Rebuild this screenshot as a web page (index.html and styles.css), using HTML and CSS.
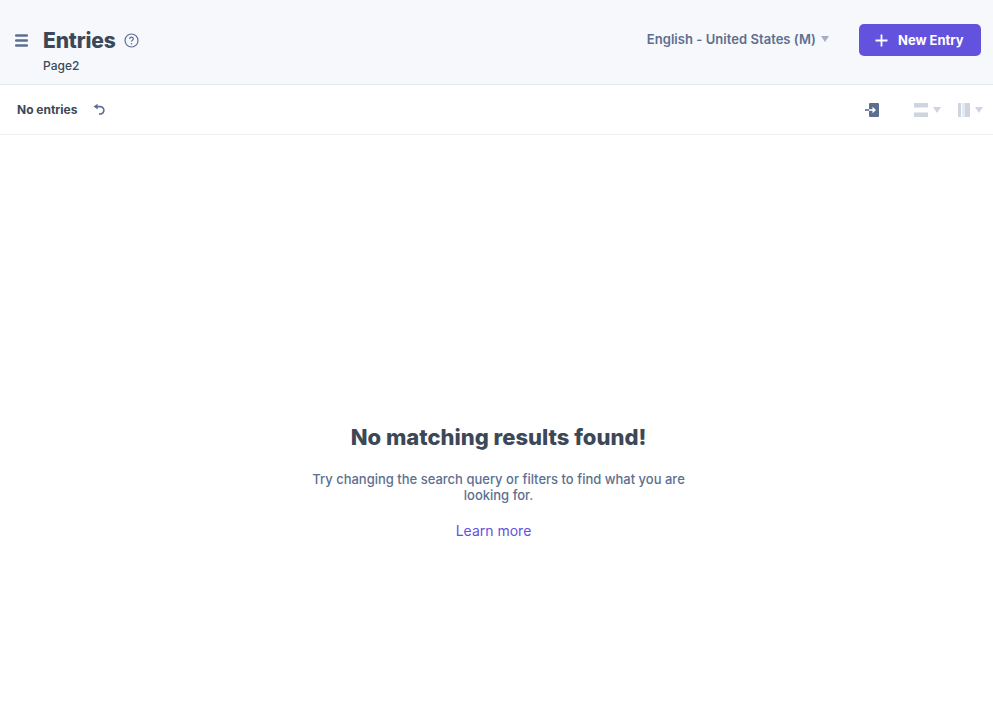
FILE: index.html
```html
<!DOCTYPE html>
<html lang="en">
<head>
    <meta charset="UTF-8">
    <title>Entries</title>
    <link rel="stylesheet" href="styles.css">
</head>
<body>
    <header class="top-bar">
        <button class="menu-btn" aria-label="Menu">
            <svg width="13" height="13" viewBox="0 0 13 13"><path d="M1.2 1.5h10.6M1.2 6.5h10.6M1.2 11.5h10.6" stroke="#5d6f90" stroke-width="2.5" stroke-linecap="round" fill="none"/></svg>
        </button>
        <div class="title-block">
            <div class="title-row">
                <h1>Entries</h1>
                <svg class="help" width="15" height="15" viewBox="0 0 15 15"><circle cx="7.5" cy="7.5" r="6.5" stroke="#5d6f90" stroke-width="1.2" fill="none"/><path d="M5.7 5.9c0-1 .8-1.7 1.8-1.7s1.8.7 1.8 1.6c0 1.4-1.8 1.4-1.8 2.8" stroke="#5d6f90" stroke-width="1.2" fill="none"/><circle cx="7.5" cy="10.7" r=".8" fill="#5d6f90"/></svg>
            </div>
            <div class="subtitle">Page2</div>
        </div>
        <div class="locale">
            <span>English - United States (M)</span>
            <span class="caret caret-locale"></span>
        </div>
        <button class="new-entry">
            <svg width="13" height="13" viewBox="0 0 13 13"><path d="M6.5 0.5v12M0.5 6.5h12" stroke="#fff" stroke-width="1.8" fill="none"/></svg>
            New Entry
        </button>
    </header>

    <div class="toolbar">
        <span class="count">No entries</span>
        <svg class="refresh" width="13" height="13" viewBox="0 0 13 13"><path d="M3.5 3.6h3.9a3.7 3.7 0 1 1-1.4 7.2" stroke="#5d6f90" stroke-width="1.6" fill="none"/><path d="M4.6 0.8L0.6 3.6l4 2.9z" fill="#5d6f90"/></svg>
        <div class="tools">
            <svg class="tool-import" width="14" height="14" viewBox="0 0 14 14"><path d="M5 0h8a1 1 0 0 1 1 1v12a1 1 0 0 1-1 1H5a1 1 0 0 1-1-1V1a1 1 0 0 1 1-1z" fill="#5d6f90"/><path d="M0 7h4" stroke="#5d6f90" stroke-width="1.6"/><path d="M4 7h4" stroke="#fff" stroke-width="1.6"/><path d="M7.5 3.8L11 7 7.5 10.2z" fill="#fff"/></svg>
            <div class="tool-group tool-density">
                <svg width="14" height="14" viewBox="0 0 14 14"><rect width="14" height="4.5" y="0" fill="#cdd5e1"/><rect width="14" height="4.5" y="9.5" fill="#cdd5e1"/></svg>
                <span class="caret"></span>
            </div>
            <div class="tool-group">
                <svg width="12" height="14" viewBox="0 0 12 14"><rect width="3" height="14" fill="#cdd5e1"/><rect x="4.5" width="1" height="14" fill="#cdd5e1"/><rect x="6.5" width="5.5" height="14" fill="#cdd5e1"/></svg>
                <span class="caret"></span>
            </div>
        </div>
    </div>

    <main class="empty">
        <h2>No matching results found!</h2>
        <p>Try changing the search query or filters to find what you are looking for.</p>
        <a href="#">Learn more</a>
    </main>
</body>
</html>
```

FILE: styles.css
```css
html, body { height: 100%; }
body { font-family: Inter, "Liberation Sans", sans-serif; margin: 0; padding: 0; background-color: #fff; color: #3c4858; overflow: hidden; }

.top-bar {
    display: flex;
    align-items: flex-start;
    height: 84px;
    background-color: #f6f8fc;
    border-bottom: 1px solid #e5ebf1;
}
.menu-btn { background: none; border: none; padding: 0; margin: 34px 0 0 15px; width: 13px; height: 13px; display: flex; }
.title-block { margin: 28px 0 0 15px; }
.title-row { display: flex; align-items: center; height: 25px; }
.title-row h1 { font-size: 21px; line-height: 25px; font-weight: 800; letter-spacing: -0.15px; margin: 0; color: #3c4858; }
.help { margin-left: 8px; }
.subtitle { font-size: 12px; line-height: 16px; font-weight: 500; margin-top: 5px; color: #3c4858; }

.locale {
    display: flex;
    align-items: center;
    margin: 31px 0 0 auto;
    height: 16px;
    font-size: 13px;
    font-weight: 600;
    letter-spacing: 0.04px;
    color: #5d6f90;
}
.caret { display: inline-block; width: 0; height: 0; border-left: 4.5px solid transparent; border-right: 4.5px solid transparent; border-top: 6px solid #cdd5e1; }
.caret-locale { border-top-color: #a3afc4; margin-left: 5px; }
.new-entry {
    display: flex;
    align-items: center;
    gap: 10px;
    width: 122px;
    height: 32px;
    margin: 24px 12px 0 30px;
    padding: 0 0 0 16px;
    background-color: #6352de;
    color: #fff;
    border: none;
    border-radius: 5px;
    font-family: inherit;
    font-size: 13px;
    font-weight: 700;
}

.toolbar {
    display: flex;
    align-items: center;
    height: 49px;
    padding-left: 17px;
    border-bottom: 1px solid #eceff3;
}
.count { font-size: 12px; font-weight: 700; color: #3c4858; }
.refresh { margin-left: 16px; }
.tools { display: flex; align-items: center; margin-left: auto; padding-right: 10px; }
.tool-import { margin-right: 35px; }
.tool-group { display: flex; align-items: center; }
.tool-group .caret { margin-left: 5px; }
.tool-density { margin-right: 17px; }

.empty { text-align: center; padding: 288px 0 0 4px; }
.empty h2 { font-size: 22px; line-height: 28px; font-weight: 800; margin: 0; color: #3c4858; }
.empty p { width: 400px; margin: 20px auto 0; font-size: 13px; line-height: 16px; font-weight: 500; color: #5d6f90; }
.empty a { display: inline-block; margin: 20px 10px 0 0; font-size: 14px; line-height: 16px; color: #6352de; text-decoration: none; }
```
